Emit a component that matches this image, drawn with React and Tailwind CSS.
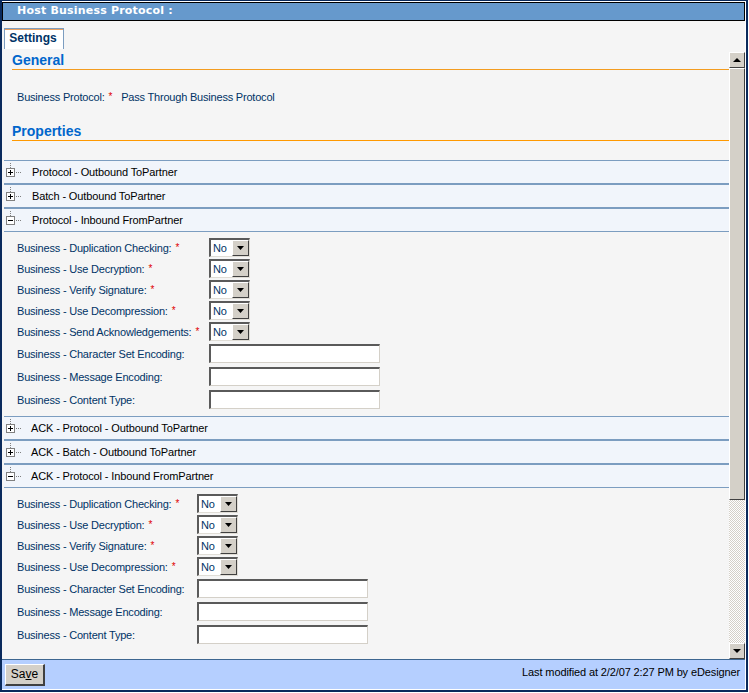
const font = "font-['Liberation_Sans',Arial,sans-serif]";
const body = "text-[11px] tracking-[-0.2px]";

function TreeIcon({ open }) {
  return (
    <svg width="18" height="16" viewBox="0 0 18 16" className="shrink-0" shapeRendering="crispEdges">
      <path d="M5 0h1v1H5zM5 2h1v1H5zM5 4h1v1H5z" fill="#808080" />
      <rect x="1.5" y="5.5" width="8" height="8" fill="#fff" stroke="#808080" />
      <rect x="3" y="9" width="5" height="1" fill="#000" />
      {!open && <rect x="5" y="7" width="1" height="5" fill="#000" />}
      <path d="M11 9h1v1h-1zM13 9h1v1h-1zM15 9h1v1h-1z" fill="#808080" />
    </svg>
  );
}

function Section({ title, open, top, height, pad }) {
  return (
    <div className={`flex items-center bg-[#f1f5fb] border-[#7c9dc0] ${top} ${height}`}>
      <div className="pl-[1px] -mt-[2px]"><TreeIcon open={open} /></div>
      <span className={`text-[11px] tracking-[-0.13px] text-black ${pad}`}>{title}</span>
    </div>
  );
}

function Star() {
  return <span className="text-[#e00000] text-[10px] ml-[4px] relative -top-[1px]">*</span>;
}

function SelectBox() {
  return (
    <div className="-mt-[2px] flex h-[19px] w-[41px] bg-white border-t-2 border-l-2 border-[#5a5a5a] border-r border-b border-r-[#e0ddd6] border-b-[#e0ddd6]">
      <span className={`flex-1 pl-[2px] ${body} leading-[17px] text-[#003366]`}>No</span>
      <span className="w-[17px] h-[16px] flex items-center justify-center bg-[#d4d0c8] border-t border-l border-white border-r border-b border-r-[#404040] border-b-[#404040]">
        <svg width="7" height="4" viewBox="0 0 7 4"><path d="M0 0h7L3.5 4z" fill="#000" /></svg>
      </span>
    </div>
  );
}

function Field({ label, star, control, w }) {
  return (
    <div className={`flex items-center pl-[13px] ${control === "input" ? "h-[23px]" : "h-[21px]"}`}>
      <div className={`shrink-0 ${w} ${body} whitespace-nowrap text-[#003366]`}>
        {label}{star && <Star />}
      </div>
      {control === "input" ? (
        <input className="-mt-[2px] h-[19px] w-[171px] bg-white border-t-2 border-l-2 border-[#5a5a5a] border-r border-b border-r-[#d4d0c8] border-b-[#d4d0c8] outline-none" readOnly />
      ) : (
        <SelectBox />
      )}
    </div>
  );
}

const group1 = [
  ["Business - Duplication Checking:", true],
  ["Business - Use Decryption:", true],
  ["Business - Verify Signature:", true],
  ["Business - Use Decompression:", true],
  ["Business - Send Acknowledgements:", true],
];
const group2 = group1.slice(0, 4);
const inputs = ["Business - Character Set Encoding:", "Business - Message Encoding:", "Business - Content Type:"];

function ScrollButton({ down }) {
  return (
    <div className="h-[16px] flex items-center justify-center bg-[#d4d0c8] border-t border-l border-white border-r border-b border-r-[#404040] border-b-[#404040]">
      <svg width="8" height="4" viewBox="0 0 8 4"><path d={down ? "M0 0h8L4 4z" : "M4 0l4 4H0z"} fill="#000" /></svg>
    </div>
  );
}

export default function App() {
  return (
    <div className={`w-[749px] h-[693px] bg-white pr-[1px] pb-[1px] ${font}`}>
      <div className="h-full border-t border-b-2 border-x-2 border-[#0a2a5c] flex flex-col bg-white">
        <div className="flex-1 flex flex-col min-h-0 mr-[1px] mt-[1px] mb-[1px]">
          <div className="h-[19px] bg-[#6699cc] border border-black flex items-center pl-[14px] shrink-0">
            <span className="text-white font-bold text-[11px] tracking-[0.2px] font-['DejaVu_Sans',sans-serif]">Host Business Protocol :</span>
          </div>
          <div className="flex-1 min-h-0 bg-[#f5f5f5] flex flex-col">
            <div className="h-[28px] shrink-0 flex items-end pl-[2px]">
              <div className="h-[21px] w-[60px] bg-white border-t border-t-[#7c9dc0] border-x border-x-[#7c9dc0] shadow-[inset_0_1px_0_#e8a060] flex items-center justify-center">
                <span className="text-[12px] font-bold text-[#003366] -mt-[3px] -ml-[2px]">Settings</span>
              </div>
            </div>
            <div className="flex-1 min-h-0 flex">
              <div className="flex-1 min-w-0 overflow-hidden">
                <div className="h-[21px] ml-[10px] border-b border-[#f39c1f] flex items-end">
                  <span className="text-[14px] leading-[17px] font-bold text-[#0066cc]">General</span>
                </div>
                <div className={`mt-[17px] h-[20px] flex items-center pl-[15px] ${body} text-[#003366]`}>
                  <span>Business Protocol:<Star /></span>
                  <span className="ml-[9px]">Pass Through Business Protocol</span>
                </div>
                <div className="mt-[15px] h-[19px] ml-[10px] border-b border-[#ff9900] flex items-end">
                  <span className="text-[14px] leading-[17px] font-bold text-[#0066cc]">Properties</span>
                </div>
                <div className="mt-[19px] ml-[2px]">
                  <Section title="Protocol - Outbound ToPartner" top="border-t" height="h-[23px]" pad="ml-[9px]" />
                  <Section title="Batch - Outbound ToPartner" top="border-t-2" height="h-[24px]" pad="ml-[9px]" />
                  <Section title="Protocol - Inbound FromPartner" open top="border-t-2 border-b" height="h-[25px]" pad="ml-[9px]" />
                  <div className="pt-[6px]">
                    {group1.map(([l, s]) => <Field key={l} label={l} star={s} control="select" w="w-[192px]" />)}
                    {inputs.map((l) => <Field key={l} label={l} control="input" w="w-[192px]" />)}
                  </div>
                  <div className="mt-[4px]">
                    <Section title="ACK - Protocol - Outbound ToPartner" top="border-t" height="h-[23px]" pad="ml-[8px]" />
                    <Section title="ACK - Batch - Outbound ToPartner" top="border-t-2" height="h-[24px]" pad="ml-[8px]" />
                    <Section title="ACK - Protocol - Inbound FromPartner" open top="border-t-2 border-b" height="h-[25px]" pad="ml-[8px]" />
                  </div>
                  <div className="pt-[6px]">
                    {group2.map(([l, s]) => <Field key={l} label={l} star={s} control="select" w="w-[180px]" />)}
                    {inputs.map((l) => <Field key={l} label={l} control="input" w="w-[180px]" />)}
                  </div>
                </div>
              </div>
              <div className="w-[16px] shrink-0 pt-[3px] flex flex-col">
                <ScrollButton />
                <div className="h-[432px] bg-[#d4d0c8] border-t border-l border-white border-r border-b border-r-[#404040] border-b-[#404040]" />
                <div className="flex-1 bg-[repeating-conic-gradient(#d4d0c8_0_25%,#ffffff_0_50%)] bg-[length:2px_2px]" />
                <ScrollButton down />
              </div>
            </div>
          </div>
          <div className="h-[30px] shrink-0 bg-[#b5cfff] border-t border-[#3d6690] flex items-center justify-between pl-[3px] pr-[5px]">
            <button className="h-[22px] w-[40px] bg-[#d4d0c8] border-t border-l border-white border-r-2 border-b-2 border-r-[#404040] border-b-[#404040] text-[12px] text-black">
              Sa<span className="underline">v</span>e
            </button>
            <span className="text-[11px] tracking-[-0.12px] text-black -mt-[4px]">Last modified at 2/2/07 2:27 PM by eDesigner</span>
          </div>
        </div>
      </div>
    </div>
  );
}
